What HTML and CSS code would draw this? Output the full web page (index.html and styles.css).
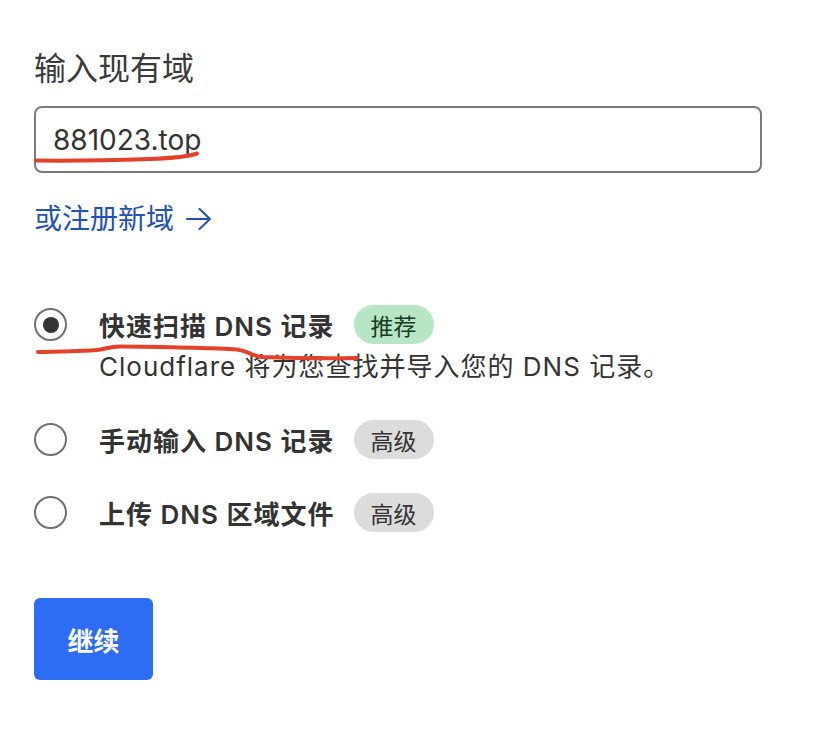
FILE: index.html
```html
<!DOCTYPE html>
<html lang="zh-CN">
<head>
<meta charset="utf-8">
<title>添加站点</title>
<link rel="stylesheet" href="styles.css">
</head>
<body>
<main class="page">
  <label class="field-label" for="domain">输入现有域</label>
  <div class="input-box" id="domain">881023.top</div>
  <a class="register-link" href="#">或注册新域 <span class="arrow">
    <svg width="26" height="22" viewBox="0 0 26 22"><path d="M1 11h23M13.5 1l10.5 10-10.5 10" fill="none" stroke="currentColor" stroke-width="2" stroke-linecap="round" stroke-linejoin="round"/></svg>
  </span></a>

  <div class="options">
    <div class="option">
      <span class="radio checked"></span>
      <div class="option-body">
        <div class="option-title"><span>快速扫描 DNS 记录</span><span class="badge green">推荐</span></div>
        <div class="option-desc">Cloudflare 将为您查找并导入您的 DNS 记录。</div>
      </div>
    </div>
    <div class="option">
      <span class="radio"></span>
      <div class="option-body">
        <div class="option-title"><span>手动输入 DNS 记录</span><span class="badge gray">高级</span></div>
      </div>
    </div>
    <div class="option">
      <span class="radio"></span>
      <div class="option-body">
        <div class="option-title"><span>上传 DNS 区域文件</span><span class="badge gray">高级</span></div>
      </div>
    </div>
  </div>

  <button class="continue">继续</button>
</main>

<svg class="marks" width="826" height="750" viewBox="0 0 826 750">
  <path d="M36 160.5 C 80 161, 120 160, 150 159 S 190 156, 197 153.5" fill="none" stroke="#e4412b" stroke-width="4" stroke-linecap="round"/>
  <path d="M38 352 C 60 351.5, 85 351, 97 350 C 105 349, 110 346.5, 120 346.5 C 160 347, 215 348, 237 349.5 C 248 351, 252 356, 262 357 C 290 358, 330 358.5, 357 358" fill="none" stroke="#e4412b" stroke-width="4" stroke-linecap="round"/>
</svg>
</body>
</html>
```

FILE: styles.css
```css
* { box-sizing: border-box; }

html, body {
  margin: 0;
  background: #ffffff;
}

body {
  font-family: "Inter", "Noto Sans CJK SC", "Noto Sans", sans-serif;
  color: #333333;
  position: relative;
  width: 826px;
  height: 750px;
  overflow: hidden;
}

.page {
  padding: 49px 0 0 34px;
  display: flex;
  flex-direction: column;
  align-items: flex-start;
}

.field-label {
  font-size: 32px;
  line-height: 40px;
  color: #3a3a3a;
}

.input-box {
  margin-top: 17px;
  width: 728px;
  height: 67px;
  border: 2px solid #7a7a7a;
  border-radius: 8px;
  padding-left: 17px;
  display: flex;
  align-items: center;
  font-size: 28px;
  color: #333;
}

.register-link {
  margin-top: 26px;
  font-size: 28px;
  line-height: 40px;
  color: #2352b4;
  text-decoration: none;
  display: flex;
  align-items: center;
}

.arrow {
  display: inline-flex;
  margin-left: 12px;
}

.options {
  margin-top: 66px;
  display: flex;
  flex-direction: column;
  gap: 34px;
}

.option {
  display: flex;
  align-items: flex-start;
}

.radio {
  flex: none;
  width: 33px;
  height: 33px;
  margin-top: 3px;
  border: 2px solid #707070;
  border-radius: 50%;
  display: flex;
  align-items: center;
  justify-content: center;
  margin-right: 32px;
}

.radio.checked::after {
  content: "";
  width: 16px;
  height: 16px;
  border-radius: 50%;
  background: #333333;
}

.option-title {
  display: flex;
  align-items: center;
  gap: 19px;
  height: 39px;
  font-size: 26px;
  font-weight: 600;
  letter-spacing: 1px;
  color: #333;
}

.option-desc {
  font-size: 26px;
  line-height: 38px;
  margin-top: 4px;
  letter-spacing: 1px;
  color: #333;
}

.badge {
  height: 39px;
  width: 80px;
  border-radius: 20px;
  display: inline-flex;
  align-items: center;
  justify-content: center;
  font-size: 23px;
  font-weight: 400;
  letter-spacing: 0;
}

.badge.green {
  background: #b6e6c3;
  color: #1b3a23;
}

.badge.gray {
  background: #dcdcdc;
  color: #333;
}

.continue {
  margin-top: 66px;
  width: 119px;
  height: 82px;
  border: none;
  border-radius: 6px;
  background: #2d6cf5;
  color: #ffffff;
  font-family: "Noto Sans CJK SC", sans-serif;
  font-size: 26px;
  font-weight: 700;
  padding: 0;
}

.marks {
  position: absolute;
  left: 0;
  top: 0;
  pointer-events: none;
}
```
